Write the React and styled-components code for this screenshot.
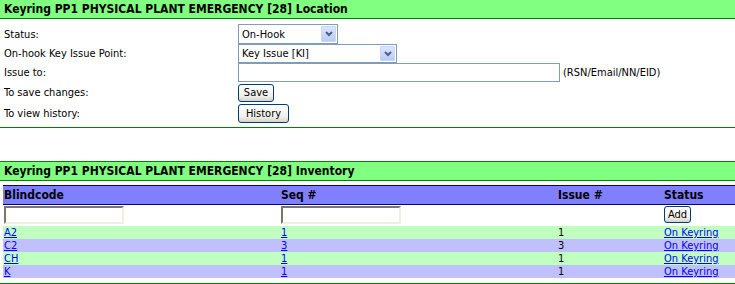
import React from 'react';
import styled, { createGlobalStyle } from 'styled-components';

const GlobalStyle = createGlobalStyle`
    body {
        margin: 0;
        background: #fff;
        color: #000;
        font-family: "DejaVu Sans Condensed", "DejaVu Sans", sans-serif;
        font-stretch: condensed;
        font-size: 11px;
    }
`;

const Page = styled.div`
    margin-top: -1px;
`;

const Section = styled.div`
    border-bottom: 1px solid #008000;
    margin-top: ${p => p.gap || 0}px;
    padding-bottom: ${p => p.bottom || 0}px;
`;

const Title = styled.div`
    background: #80ff80;
    border-top: 1px solid #008000;
    border-bottom: 1px solid #008000;
    height: 18px;
    line-height: 18px;
    padding-left: 4px;
    font-size: 12px;
    font-weight: bold;
    white-space: nowrap;
`;

const Form = styled.div`
    display: grid;
    grid-template-columns: 234px 1fr;
    grid-template-rows: 20px 19px 19px 21px 20px;
    padding: 5px 0 4px 4px;
    align-items: center;
`;

const Label = styled.div`
    line-height: 13px;
`;

const Field = styled.div`
    display: flex;
    align-items: center;
    gap: 3px;
`;

const SelectBox = styled.div`
    display: flex;
    align-items: center;
    box-sizing: border-box;
    width: ${p => p.w}px;
    height: ${p => p.h}px;
    border: 1px solid #7f9db9;
    background: #fff;
`;

const NativeSelect = styled.select`
    appearance: none;
    flex: 1;
    min-width: 0;
    border: none;
    background: transparent;
    padding: 0 0 0 3px;
    font: inherit;
    color: #000;
    outline: none;
`;

const ArrowBox = styled.span`
    display: flex;
    align-items: center;
    justify-content: center;
    box-sizing: border-box;
    width: 15px;
    height: calc(100% - 2px);
    margin-right: 1px;
    border: 1px solid #c8d6fa;
    border-radius: 1px;
    background: linear-gradient(#dbe5fd, #b9cbf6);
`;

const TextInput = styled.input`
    box-sizing: border-box;
    width: ${p => p.w}px;
    height: 19px;
    border: 1px solid #7f9db9;
    padding: 0 2px;
    font: inherit;
    outline: none;
`;

const Hint = styled.span`
    white-space: nowrap;
`;

const XpButton = styled.button`
    box-sizing: border-box;
    width: ${p => p.w}px;
    height: ${p => p.h || 18}px;
    padding: 0;
    border: 1px solid #003c74;
    border-radius: 3px;
    background: linear-gradient(#ffffff, #f0efea 70%, #d8d2c6);
    font: inherit;
    font-size: 11px;
    font-weight: normal;
    color: #000;
`;

const Grid = styled.div`
    margin-left: 3px;
`;

const Row = styled.div`
    display: grid;
    grid-template-columns: 277px 277px 106px 1fr;
    align-items: center;
    height: ${p => p.h || 13}px;
    line-height: ${p => p.h || 13}px;
    background: ${p => p.bg || 'transparent'};
`;

const HeadRow = styled(Row)`
    margin-top: 4px;
    border-top: 1px solid #000080;
    border-bottom: 1px solid #000080;
    background: #8080ff;
    font-size: 12px;
    font-weight: bold;
`;

const FilterRow = styled(Row)`
    box-sizing: border-box;
    height: 21px;
    padding: 1px 0 2px;
    align-items: start;
`;

const Cell = styled.div`
    padding-left: 1px;
    white-space: nowrap;
`;

const InsetInput = styled.input`
    box-sizing: border-box;
    width: 120px;
    height: 18px;
    border-style: solid;
    border-width: 2px;
    border-color: #7a766a #f1efe2 #f1efe2 #7a766a;
    padding: 0 2px;
    font: inherit;
    outline: none;
`;

const Link = styled.a`
    color: #0000ff;
    text-decoration: underline;
`;

const Chevron = () => (
    <svg width="8" height="6" viewBox="0 0 8 6">
        <path d="M1 1 L4 4 L7 1" fill="none" stroke="#4d6185" strokeWidth="2" />
    </svg>
);

const Select = ({ w, h, value }) => (
    <SelectBox w={w} h={h}>
        <NativeSelect defaultValue={value}>
            <option>{value}</option>
        </NativeSelect>
        <ArrowBox><Chevron /></ArrowBox>
    </SelectBox>
);

const rows = [
    { code: 'A2', seq: '1', issue: '1' },
    { code: 'C2', seq: '3', issue: '3' },
    { code: 'CH', seq: '1', issue: '1' },
    { code: 'K', seq: '1', issue: '1' }
];

export default function App() {
    return (
        <Page>
            <GlobalStyle />
            <Section>
                <Title>Keyring PP1 PHYSICAL PLANT EMERGENCY [28] Location</Title>
                <Form>
                    <Label>Status:</Label>
                    <Field><Select w={100} h={20} value="On-Hook" /></Field>
                    <Label>On-hook Key Issue Point:</Label>
                    <Field><Select w={159} h={19} value="Key Issue [KI]" /></Field>
                    <Label>Issue to:</Label>
                    <Field>
                        <TextInput w={322} />
                        <Hint>(RSN/Email/NN/EID)</Hint>
                    </Field>
                    <Label>To save changes:</Label>
                    <Field><XpButton w={36} h={18}>Save</XpButton></Field>
                    <Label>To view history:</Label>
                    <Field><XpButton w={51} h={19}>History</XpButton></Field>
                </Form>
            </Section>
            <Section gap={33} bottom={5}>
                <Title>Keyring PP1 PHYSICAL PLANT EMERGENCY [28] Inventory</Title>
                <Grid>
                    <HeadRow h={18}>
                        <Cell>Blindcode</Cell>
                        <Cell>Seq #</Cell>
                        <Cell>Issue #</Cell>
                        <Cell>Status</Cell>
                    </HeadRow>
                    <FilterRow>
                        <Cell><InsetInput /></Cell>
                        <Cell><InsetInput /></Cell>
                        <Cell />
                        <Cell><XpButton w={27} h={17}>Add</XpButton></Cell>
                    </FilterRow>
                    {rows.map((r, i) => (
                        <Row key={r.code} bg={i % 2 ? '#c0c0ff' : '#c0ffc0'}>
                            <Cell><Link href="#">{r.code}</Link></Cell>
                            <Cell><Link href="#">{r.seq}</Link></Cell>
                            <Cell>{r.issue}</Cell>
                            <Cell><Link href="#">On Keyring</Link></Cell>
                        </Row>
                    ))}
                </Grid>
            </Section>
        </Page>
    );
}
